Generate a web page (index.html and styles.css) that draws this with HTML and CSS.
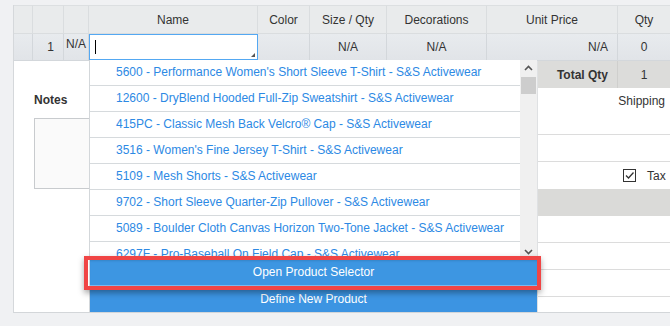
FILE: index.html
```html
<!DOCTYPE html>
<html>
<head>
<meta charset="utf-8">
<link rel="stylesheet" href="styles.css">
</head>
<body>
<div class="page">
  <div class="panel">
    <div class="grid">
      <div class="hd"></div>
      <div class="hd"></div>
      <div class="hd"></div>
      <div class="hd">Name</div>
      <div class="hd">Color</div>
      <div class="hd">Size / Qty</div>
      <div class="hd">Decorations</div>
      <div class="hd">Unit Price</div>
      <div class="hd">Qty</div>

      <div class="cell"></div>
      <div class="cell right">1</div>
      <div class="cell top">N/A</div>
      <div class="cell name-cell">
        <div class="name-input"><span class="caret"></span><span class="grip"></span></div>
      </div>
      <div class="cell"></div>
      <div class="cell">N/A</div>
      <div class="cell">N/A</div>
      <div class="cell right">N/A</div>
      <div class="cell">0</div>
    </div>

    <div class="body">
      <div class="notes-area">
        <div class="notes-label">Notes</div>
        <div class="notes-box"></div>
      </div>
      <div class="summary">
        <div class="srow total">
          <div class="total-label">Total Qty</div>
          <div class="total-value">1</div>
        </div>
        <div class="srow ship"><span>Shipping</span></div>
        <div class="srow"></div>
        <div class="srow tax">
          <svg class="check" width="14" height="14" viewBox="0 0 14 14"><rect x="0.5" y="0.5" width="12" height="12" fill="#fff" stroke="#333"/><path d="M3 6.5 L5.5 9 L10.5 3.5" fill="none" stroke="#333" stroke-width="1.3"/></svg>
          <span>Tax</span>
        </div>
        <div class="srow gray"></div>
        <div class="srow"></div>
        <div class="srow"></div>
        <div class="srow"></div>
        <div class="srow last"></div>
      </div>
    </div>

    <div class="dropdown">
      <div class="dd-main">
        <div class="dd-list">
          <div class="dd-item">5600 - Performance Women's Short Sleeve T-Shirt - S&amp;S Activewear</div>
          <div class="dd-item">12600 - DryBlend Hooded Full-Zip Sweatshirt - S&amp;S Activewear</div>
          <div class="dd-item">415PC - Classic Mesh Back Velcro® Cap - S&amp;S Activewear</div>
          <div class="dd-item">3516 - Women's Fine Jersey T-Shirt - S&amp;S Activewear</div>
          <div class="dd-item">5109 - Mesh Shorts - S&amp;S Activewear</div>
          <div class="dd-item">9702 - Short Sleeve Quarter-Zip Pullover - S&amp;S Activewear</div>
          <div class="dd-item">5089 - Boulder Cloth Canvas Horizon Two-Tone Jacket - S&amp;S Activewear</div>
          <div class="dd-item">6297F - Pro-Baseball On Field Cap - S&amp;S Activewear</div>
        </div>
        <div class="scrollbar">
          <svg class="arrow" width="9" height="6" viewBox="0 0 9 6"><path d="M1 5 L4.5 1.5 L8 5" fill="none" stroke="#555" stroke-width="1.6"/></svg>
          <div class="thumb"></div>
          <div class="spacer"></div>
          <svg class="arrow" width="9" height="6" viewBox="0 0 9 6"><path d="M1 1 L4.5 4.5 L8 1" fill="none" stroke="#555" stroke-width="1.6"/></svg>
        </div>
      </div>
      <div class="dd-btn open">Open Product Selector</div>
      <div class="dd-btn define">Define New Product</div>
    </div>
    <div class="highlight"></div>
  </div>
</div>
</body>
</html>
```

FILE: styles.css
```css
* { box-sizing: border-box; }
html, body { margin: 0; padding: 0; }
body {
  background: #f0f1f3;
  font-family: "Liberation Sans", Arial, sans-serif;
  font-size: 12px;
  color: #333;
  width: 670px;
  height: 326px;
  overflow: hidden;
}
.page {
  padding: 5px 0 0 13px;
}
.panel {
  position: relative;
  width: 657px;
  background: #fff;
  border-left: 1px solid #d5d8db;
  border-bottom: 1px solid #d3d6d9;
}
.grid {
  display: grid;
  grid-template-columns: 19px 31px 25px 169px 52px 77px 100px 131px 53px;
  grid-template-rows: 29px 27px;
}
.hd {
  background: #e9ebec;
  border-top: 1px solid #dcdfe1;
  border-right: 1px solid #dadddf;
  border-bottom: 1px solid #dadddf;
  display: flex;
  align-items: center;
  justify-content: center;
  line-height: 14px;
}
.cell {
  background: linear-gradient(#e8ebee, #e1e4e8);
  border-right: 1px solid #d3d7db;
  border-bottom: 1px solid #d3d7db;
  display: flex;
  align-items: center;
  justify-content: center;
  line-height: 14px;
}
.cell.right { justify-content: flex-end; padding-right: 9px; }
.cell.top { align-items: flex-start; justify-content: flex-start; padding: 3px 0 0 2px; }
.name-cell {
  border: none;
  background: #fff;
  padding: 0;
  align-items: stretch;
}
.name-input {
  position: relative;
  width: 100%;
  height: 26px;
  border: 1px solid #54a8f2;
  background: #fff;
}
.caret {
  position: absolute;
  left: 5px;
  top: 5px;
  width: 1px;
  height: 14px;
  background: #000;
}
.grip {
  position: absolute;
  right: 2px;
  bottom: 2px;
  width: 0;
  height: 0;
  border-left: 4px solid transparent;
  border-bottom: 4px solid #555;
}
.body {
  display: flex;
  height: 251px;
}
.notes-area {
  flex: 1;
  padding: 32px 0 0 20px;
}
.notes-label {
  font-weight: bold;
  line-height: 14px;
  margin-bottom: 11px;
}
.notes-box {
  width: 300px;
  height: 71px;
  background: #fafafa;
  border: 1px solid #c8cbce;
}
.summary {
  width: 133px;
  border-left: 1px solid #dfe1e3;
  display: flex;
  flex-direction: column;
}
.srow {
  height: 27px;
  border-bottom: 1px solid #dcdcdc;
  flex: none;
}
.srow.total {
  background: #dcdcda;
  border-bottom: none;
  display: flex;
  align-items: center;
}
.total-label {
  width: 80px;
  height: 100%;
  display: flex;
  align-items: center;
  justify-content: flex-end;
  padding-right: 9px;
  font-weight: bold;
  border-right: 1px solid #cfcfcd;
}
.total-value {
  flex: 1;
  text-align: center;
}
.srow.ship {
  height: 47px;
  text-align: right;
  padding: 6px 5px 0 0;
  line-height: 14px;
}
.srow.tax {
  display: flex;
  align-items: center;
  padding-left: 85px;
  border-bottom: none;
}
.check { margin-right: 10px; }
.srow.gray {
  background: #dadad8;
  border-bottom: none;
}
.srow.last {
  flex: 1;
  border-bottom: none;
}
.dropdown {
  position: absolute;
  left: 75px;
  top: 55px;
  width: 448px;
  height: 252px;
  background: #fff;
  border-left: 1px solid #d3d7da;
  display: flex;
  flex-direction: column;
}
.dd-main {
  display: flex;
  height: 199px;
  flex: none;
}
.dd-list {
  flex: 1;
  overflow: hidden;
}
.dd-item {
  height: 26px;
  line-height: 25px;
  border-bottom: 1px solid #d6dadd;
  padding-left: 26px;
  color: #2c89e4;
  white-space: nowrap;
  overflow: hidden;
}
.scrollbar {
  width: 17px;
  background: #f0f0f0;
  display: flex;
  flex-direction: column;
  align-items: center;
  padding: 5px 0 4px;
}
.thumb {
  width: 15px;
  height: 17px;
  background: #cdcdcd;
  margin-top: 6px;
}
.spacer { flex: 1; }
.dd-btn {
  color: #fff;
  text-align: center;
  flex: none;
}
.dd-btn.open {
  height: 27px;
  line-height: 26px;
  background: #3d96e2;
  border-bottom: 1px solid #7cb9ee;
  box-shadow: inset 0 3px 3px -2px rgba(0,0,0,0.25);
}
.dd-btn.define {
  height: 26px;
  line-height: 26px;
  background: #3c94e2;
}
.highlight {
  position: absolute;
  left: 70px;
  top: 251px;
  width: 457px;
  height: 34px;
  border: 4px solid #f04545;
  box-shadow: 0 3px 6px rgba(0,0,0,0.35);
}
```
